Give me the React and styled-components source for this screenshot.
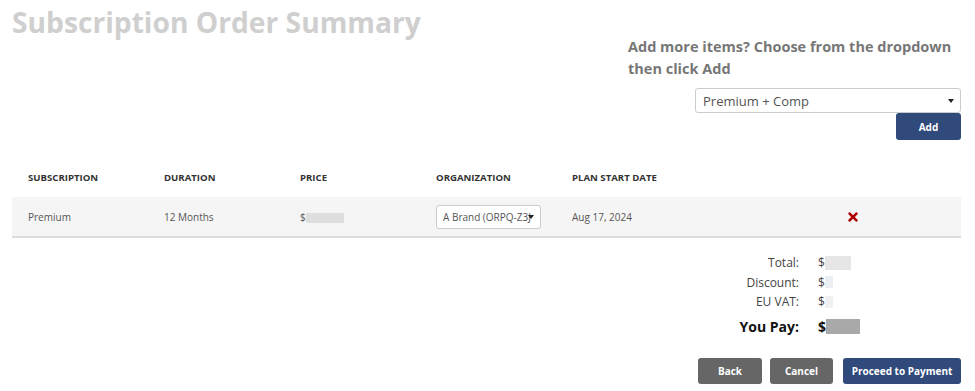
import React from 'react';
import styled, { createGlobalStyle } from 'styled-components';
import { FaTimes } from 'react-icons/fa';

const GlobalStyle = createGlobalStyle`
  body {
    margin: 0;
    background: #fff;
    font-family: "Open Sans", "Noto Sans", Arial, sans-serif;
    color: #555;
  }
`;

const Page = styled.div`
  padding: 0 14px 0 12px;
  width: 949px;
`;

const Top = styled.div`
  display: flex;
  justify-content: space-between;
  align-items: flex-start;
`;

const Title = styled.h1`
  margin: 0;
  font-size: 28.2px;
  line-height: 44px;
  font-weight: 700;
  color: #cfcfcf;
`;

const AddPanel = styled.div`
  width: 333px;
  padding-top: 36px;
  display: flex;
  flex-direction: column;
  align-items: flex-end;
`;

const AddText = styled.div`
  align-self: stretch;
  font-size: 14.5px;
  line-height: 22px;
  font-weight: 700;
  color: #777;
  white-space: nowrap;
  margin-bottom: 8px;
`;

const SelectBox = styled.div`
  position: relative;
  box-sizing: border-box;
  width: ${p => p.$w}px;
  height: ${p => p.$h}px;
  border: 1px solid #ccc;
  border-radius: 3px;
  background: #fff;
  font-size: ${p => p.$fs}px;
  color: #555;
  display: flex;
  align-items: center;
  padding-left: ${p => p.$pl}px;
  white-space: nowrap;
  overflow: hidden;
  &::after {
    content: '';
    position: absolute;
    right: 6px;
    top: 50%;
    margin-top: -2px;
    border-left: 3px solid transparent;
    border-right: 3px solid transparent;
    border-top: 4px solid #222;
  }
`;

const Button = styled.button`
  box-sizing: border-box;
  width: ${p => p.$w}px;
  height: ${p => p.$h || 26}px;
  padding: 0;
  border: none;
  border-radius: 3px;
  background: ${p => (p.$primary ? '#2f4a7b' : '#666')};
  color: #fff;
  font-family: inherit;
  font-size: 10px;
  font-weight: 700;
  cursor: pointer;
`;

const Table = styled.div`
  margin-top: 17px;
`;

const Row = styled.div`
  display: grid;
  grid-template-columns: 136px 136px 136px 136px 136px 1fr;
  align-items: center;
  height: ${p => (p.$head ? 40 : 39)}px;
  padding-left: 16px;
  background: ${p => (p.$head ? '#fff' : '#f5f5f5')};
  border-bottom: ${p => (p.$head ? 'none' : '2px solid #ddd')};
  font-size: ${p => (p.$head ? 9.6 : 10)}px;
  font-weight: ${p => (p.$head ? 700 : 400)};
  color: ${p => (p.$head ? '#333' : '#555')};
  text-transform: ${p => (p.$head ? 'uppercase' : 'none')};
`;

const Blur = styled.span`
  display: inline-block;
  vertical-align: middle;
  width: ${p => p.$w}px;
  height: ${p => p.$h}px;
  background: ${p => p.$c};
  filter: blur(0.6px);
`;

const Remove = styled.div`
  padding-left: 138px;
  color: #b00000;
  display: flex;
  align-items: center;
`;

const Totals = styled.div`
  display: grid;
  grid-template-columns: auto 143px;
  column-gap: 19px;
  justify-content: end;
  margin-top: 15px;
`;

const Label = styled.div`
  text-align: right;
  font-size: ${p => (p.$big ? 14 : 12)}px;
  font-weight: ${p => (p.$big ? 700 : 400)};
  color: ${p => (p.$big ? '#111' : '#444')};
  margin-top: ${p => (p.$big ? 4 : 0)}px;
  line-height: ${p => (p.$big ? 22 : 19.5)}px;
`;

const Value = styled(Label)`
  text-align: left;
  display: flex;
  align-items: center;
`;

const Actions = styled.div`
  display: flex;
  justify-content: flex-end;
  gap: 8px;
  margin-top: 20px;
  & > :last-child {
    margin-left: 2px;
  }
`;

export default function App() {
  return (
    <Page>
      <GlobalStyle />
      <Top>
        <Title>Subscription Order Summary</Title>
        <AddPanel>
          <AddText>
            Add more items? Choose from the dropdown
            <br />
            then click Add
          </AddText>
          <SelectBox $w={266} $h={25} $fs={13} $pl={7}>Premium + Comp</SelectBox>
          <Button $primary $w={65} $h={27}>Add</Button>
        </AddPanel>
      </Top>
      <Table>
        <Row $head>
          <div>Subscription</div>
          <div>Duration</div>
          <div>Price</div>
          <div>Organization</div>
          <div>Plan Start Date</div>
          <div />
        </Row>
        <Row>
          <div>Premium</div>
          <div>12 Months</div>
          <div>$<Blur $w={38} $h={10} $c="#dedede" /></div>
          <div>
            <SelectBox $w={105} $h={24} $fs={10} $pl={6}>A Brand (ORPQ-Z3J</SelectBox>
          </div>
          <div>Aug 17, 2024</div>
          <Remove><FaTimes size={14} /></Remove>
        </Row>
      </Table>
      <Totals>
        <Label>Total:</Label>
        <Value>$<Blur $w={26} $h={14} $c="#e6e6e6" /></Value>
        <Label>Discount:</Label>
        <Value>$<Blur $w={8} $h={12} $c="#eceff1" /></Value>
        <Label>EU VAT:</Label>
        <Value>$<Blur $w={8} $h={12} $c="#eef0f2" /></Value>
        <Label $big>You Pay:</Label>
        <Value $big>$<Blur $w={34} $h={15} $c="#a9a9a9" /></Value>
      </Totals>
      <Actions>
        <Button $w={64}>Back</Button>
        <Button $w={63}>Cancel</Button>
        <Button $primary $w={118}>Proceed to Payment</Button>
      </Actions>
    </Page>
  );
}
